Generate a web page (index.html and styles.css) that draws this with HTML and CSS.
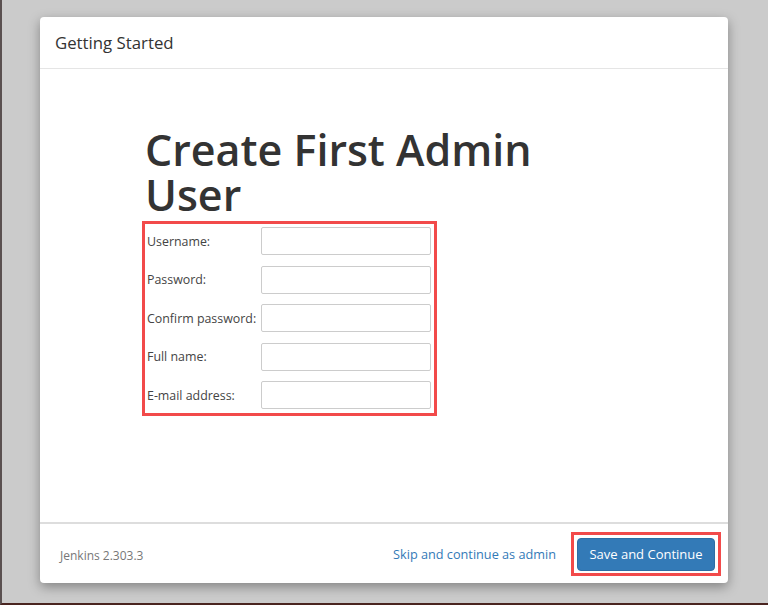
FILE: index.html
```html
<!DOCTYPE html>
<html>
<head>
<meta charset="utf-8">
<link rel="stylesheet" href="styles.css">
</head>
<body>
<div class="screen">
  <div class="dialog">
    <div class="dialog-header">Getting Started</div>
    <div class="dialog-body">
      <h1 class="title">Create First Admin User</h1>
      <form class="form">
        <div class="row"><label class="label">Username:</label><input class="field" type="text"></div>
        <div class="row"><label class="label">Password:</label><input class="field" type="password"></div>
        <div class="row"><label class="label">Confirm password:</label><input class="field" type="password"></div>
        <div class="row"><label class="label">Full name:</label><input class="field" type="text"></div>
        <div class="row"><label class="label">E-mail address:</label><input class="field" type="text"></div>
      </form>
    </div>
    <div class="dialog-footer">
      <span class="version">Jenkins 2.303.3</span>
      <a class="skip" href="#">Skip and continue as admin</a>
      <div class="btn-highlight"><button class="btn" type="button">Save and Continue</button></div>
    </div>
  </div>
</div>
</body>
</html>
```
FILE: styles.css
```css
html, body {
  margin: 0;
  padding: 0;
}
body {
  background: #cbcbcb;
  font-family: "Open Sans", "Noto Sans", sans-serif;
  color: #333;
}
.screen {
  width: 768px;
  height: 605px;
  box-sizing: border-box;
  border-left: 2px solid #5a5050;
  border-bottom: 2px solid #4a2420;
  padding: 17px 0 0 38px;
}
.dialog {
  width: 688px;
  height: 566px;
  background: #fff;
  border-radius: 4px;
  box-shadow: 0 4px 12px rgba(0,0,0,0.35);
  display: flex;
  flex-direction: column;
}
.dialog-header {
  height: 52px;
  box-sizing: border-box;
  border-bottom: 1px solid #e5e5e5;
  padding: 0 15px;
  display: flex;
  align-items: center;
  font-size: 16.8px;
  color: #333;
}
.dialog-body {
  flex: 1;
  padding: 58px 0 0 105px;
}
.title {
  margin: 0;
  font-size: 43px;
  line-height: 45px;
  font-weight: 600;
  color: #333;
  width: 430px;
  letter-spacing: 0;
}
.form {
  margin-top: 4px;
  margin-left: -3px;
  width: 295px;
  box-sizing: border-box;
  border: 3px solid #f24a4a;
  padding: 3px 3px 3px 2px;
  display: flex;
  flex-direction: column;
  gap: 10px;
}
.row {
  display: flex;
  align-items: center;
  height: 28.5px;
}
.label {
  width: 114px;
  font-size: 12.4px;
  color: #444;
}
.field {
  width: 170px;
  height: 28px;
  box-sizing: border-box;
  border: 1px solid #ccc;
  border-radius: 2px;
  margin: 0;
  padding: 0 6px;
  background: #fff;
}
.dialog-footer {
  height: 61px;
  box-sizing: border-box;
  border-top: 2px solid #ddd;
  display: flex;
  align-items: center;
  padding: 0 7px 0 20px;
}
.version {
  font-size: 12px;
  color: #777;
  flex: 1;
  padding-top: 3px;
}
.skip {
  font-size: 12.7px;
  color: #337ab7;
  text-decoration: none;
  margin-right: 15px;
}
.btn-highlight {
  border: 3px solid #f24a4a;
  padding: 3px 3px 2px 3px;
  display: flex;
}
.btn {
  width: 138px;
  height: 33px;
  background: #337ab7;
  border: 1px solid #2e6da4;
  border-radius: 4px;
  color: #fff;
  font-family: "Open Sans", "Noto Sans", sans-serif;
  font-size: 13px;
  padding: 0;
}
```
